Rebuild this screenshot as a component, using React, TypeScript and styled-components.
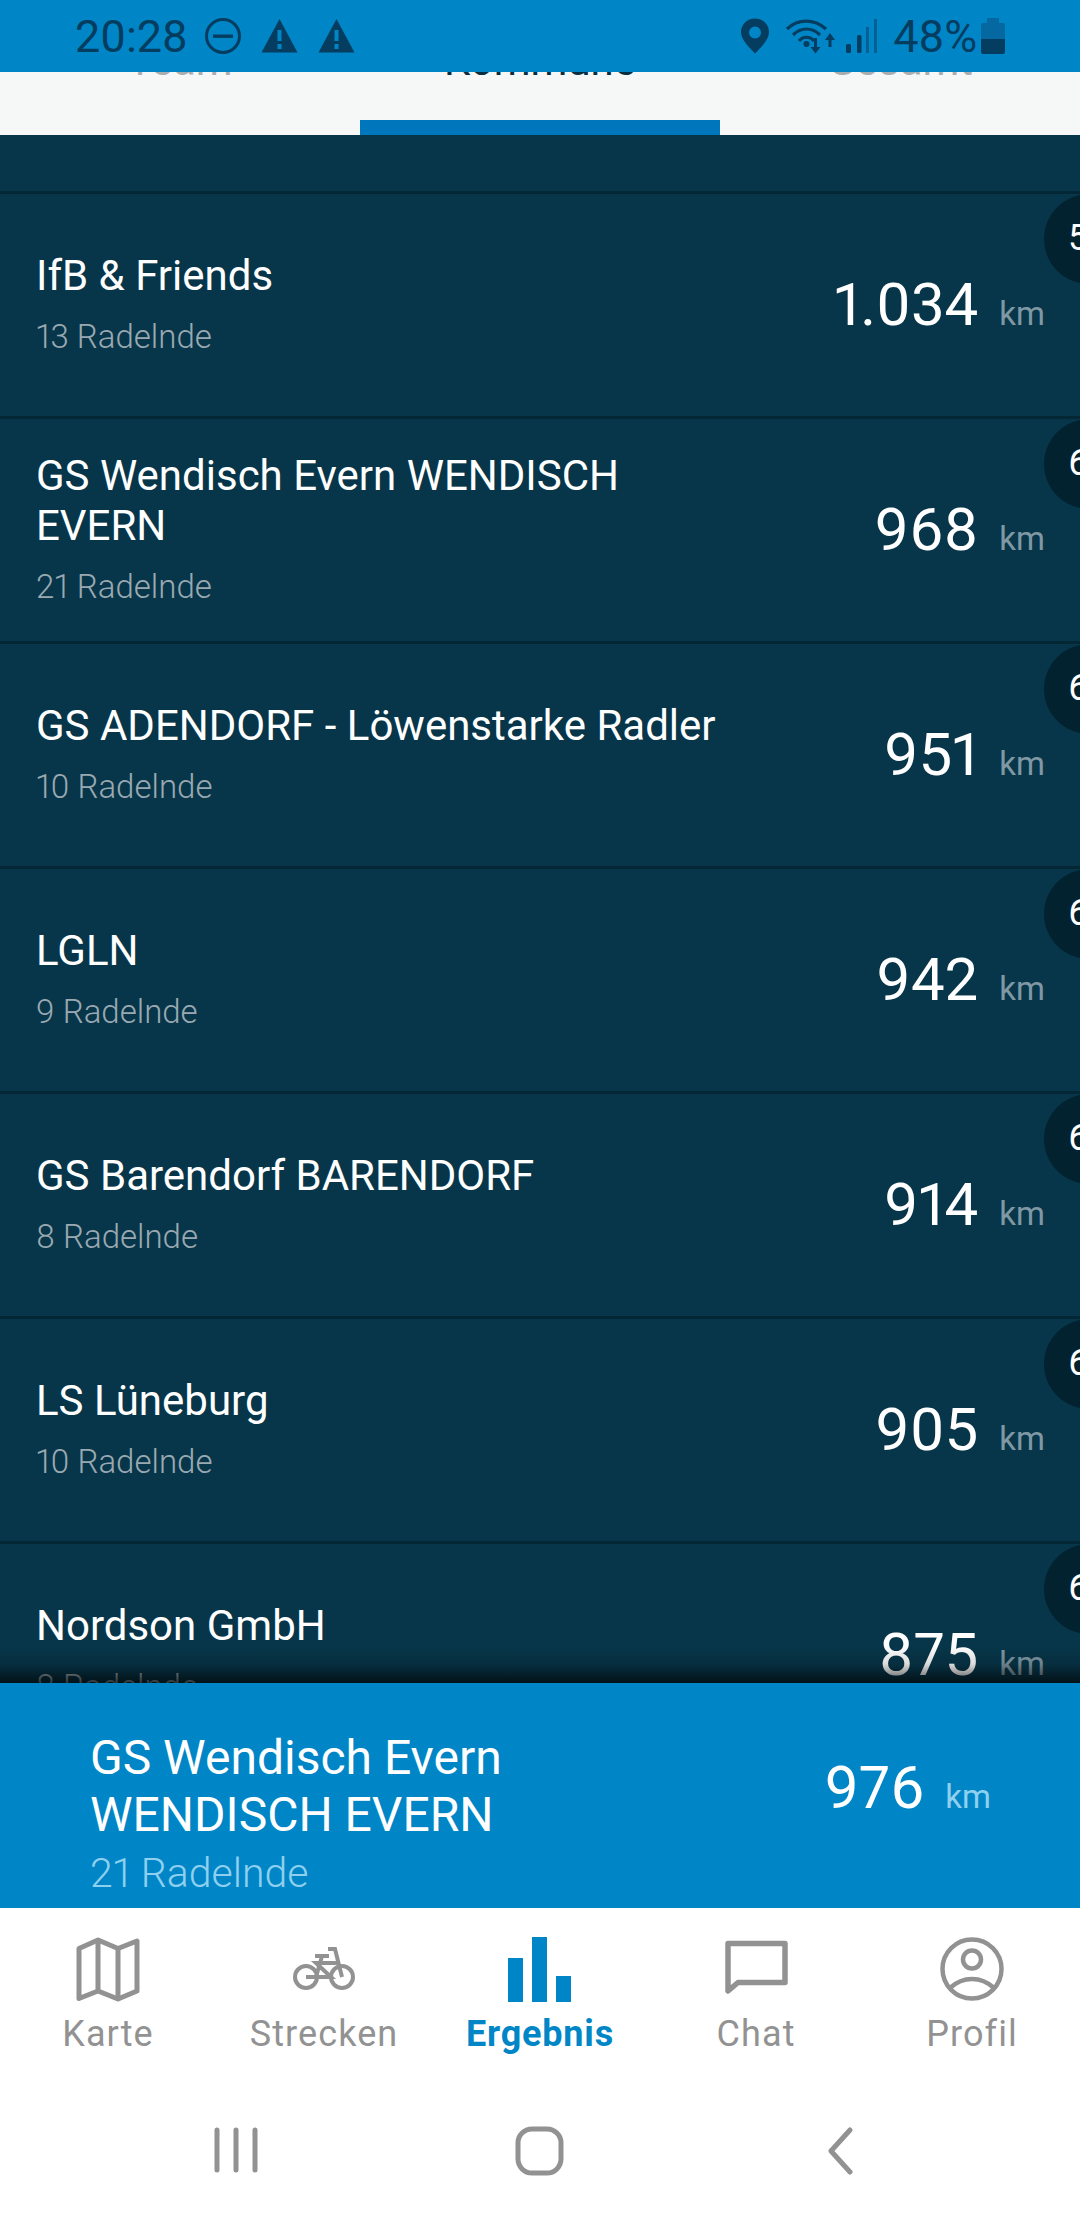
import React from "react";
import styled, { createGlobalStyle } from "styled-components";

const Global = createGlobalStyle`
  html, body { margin: 0; padding: 0; background: #fff; }
  body { font-family: Roboto, "Liberation Sans", sans-serif; font-variant-numeric: proportional-nums; }
  * { box-sizing: border-box; }
`;

const Screen = styled.div`
  width: 1080px;
  height: 2220px;
  display: flex;
  flex-direction: column;
  overflow: hidden;
  background: #fff;
`;

const StatusBar = styled.header`
  position: relative;
  z-index: 2;
  height: 72px;
  flex: none;
  background: #0086c6;
  color: #053d60;
  display: flex;
  align-items: center;
  justify-content: space-between;
  padding: 0 75px 0 75px;
  font-size: 45px;
`;

const StatusGroup = styled.div`
  display: flex;
  align-items: center;
  height: 72px;
`;

const StatusText = styled.span<{ $ml?: number }>`
  margin-left: ${(p) => p.$ml ?? 0}px;
  line-height: 72px;
  letter-spacing: -0.2px;
  padding-top: 1px;
`;

const StatusIcon = styled.svg<{ $ml?: number }>`
  display: block;
  flex: none;
  margin-left: ${(p) => p.$ml ?? 0}px;
`;

const Tabs = styled.nav`
  height: 63px;
  flex: none;
  display: grid;
  grid-template-columns: repeat(3, 360px);
  background: #f6f7f7;
`;

const Tab = styled.div<{ $active?: boolean }>`
  height: 63px;
  text-align: center;
  font-size: 42px;
  line-height: 48px;
  color: ${(p) => (p.$active ? "#0c2d3f" : "#a9adb0")};
  border-bottom: 15px solid ${(p) => (p.$active ? "#0076bc" : "transparent")};
`;

const TabLabel = styled.span`
  display: block;
  margin-top: -35px;
`;

const List = styled.section`
  position: relative;
  flex: 1;
  min-height: 0;
  overflow: hidden;
  background: #07364a;
  padding-top: 56px;
  &::after {
    content: "";
    position: absolute;
    left: 0;
    right: 0;
    bottom: 0;
    height: 38px;
    background: linear-gradient(
      to bottom,
      rgba(0, 0, 0, 0),
      rgba(0, 0, 0, 0.14) 50%,
      rgba(0, 0, 0, 0.68)
    );
  }
`;

const Row = styled.article`
  position: relative;
  height: 225px;
  border-top: 3px solid #042735;
  display: flex;
  align-items: center;
  padding: 0 35px 0 36px;
  overflow: hidden;
`;

const Info = styled.div`
  width: 700px;
  flex: none;
  margin-top: -3px;
`;

const Title = styled.div`
  color: #fff;
  font-size: 42px;
  line-height: 50px;
`;

const Sub = styled.div`
  color: #9aa9b1;
  font-size: 33px;
  font-weight: 300;
  line-height: 40px;
  margin-top: 16px;
`;

const Distance = styled.div`
  margin-left: auto;
  display: flex;
  align-items: baseline;
  color: #fff;
`;

const Value = styled.span`
  font-size: 60px;
  line-height: 70px;
`;

const Unit = styled.span<{ $color: string }>`
  font-size: 33px;
  margin-left: 21px;
  color: ${(p) => p.$color};
`;

const Badge = styled.div`
  position: absolute;
  top: 0;
  left: 1044px;
  width: 90px;
  height: 90px;
  border-radius: 50%;
  background: #03222f;
  color: #fff;
  font-size: 36px;
  line-height: 88px;
  padding-left: 24px;
`;

const Mine = styled.section`
  height: 225px;
  flex: none;
  position: relative;
  z-index: 1;
  background: #0086c6;
  display: flex;
  align-items: center;
  padding: 34px 89px 0 90px;
`;

const MineInfo = styled.div`
  width: 640px;
  flex: none;
`;

const MineTitle = styled.div`
  color: #fff;
  font-size: 48px;
  line-height: 57px;
`;

const MineSub = styled.div`
  color: #8fd0f0;
  font-size: 41px;
  font-weight: 300;
  line-height: 46px;
  margin-top: 7px;
`;

const MineDistance = styled(Distance)`
  margin-bottom: 50px;
`;

const BottomNav = styled.nav`
  height: 312px;
  flex: none;
  background: #fff;
  display: flex;
  flex-direction: column;
`;

const NavItems = styled.div`
  display: grid;
  grid-template-columns: repeat(5, 216px);
  height: 177px;
  padding-top: 28px;
`;

const NavItem = styled.div<{ $active?: boolean }>`
  display: flex;
  flex-direction: column;
  align-items: center;
  color: ${(p) => (p.$active ? "#0086c6" : "#929292")};
`;

const NavIcon = styled.svg`
  display: block;
  width: 66px;
  height: 66px;
  flex: none;
`;

const NavLabel = styled.span<{ $active?: boolean }>`
  font-size: 36px;
  font-weight: ${(p) => (p.$active ? 700 : 400)};
  letter-spacing: ${(p) => (p.$active ? 0.8 : 1.1)}px;
  line-height: 42px;
  margin-top: 11px;
`;

const SystemBar = styled.div`
  display: grid;
  grid-template-columns: 472px 136px 472px;
  height: 135px;
`;

const SystemCell = styled.div<{ $justify: string; $pad?: string }>`
  display: flex;
  align-items: flex-start;
  justify-content: ${(p) => p.$justify};
  padding: ${(p) => p.$pad ?? "0"};
`;

const rows = [
  { name: "IfB & Friends", count: "13 Radelnde", km: "1.034", rank: "5" },
  { name: "GS Wendisch Evern WENDISCH EVERN", count: "21 Radelnde", km: "968", rank: "6" },
  { name: "GS ADENDORF - Löwenstarke Radler", count: "10 Radelnde", km: "951", rank: "6" },
  { name: "LGLN", count: "9 Radelnde", km: "942", rank: "6" },
  { name: "GS Barendorf BARENDORF", count: "8 Radelnde", km: "914", rank: "6" },
  { name: "LS Lüneburg", count: "10 Radelnde", km: "905", rank: "6" },
  { name: "Nordson GmbH", count: "8 Radelnde", km: "875", rank: "6" },
];

const Warning = () => (
  <StatusIcon $ml={20} width="37" height="36" viewBox="0 0 37 36">
    <path fill="#053d60" fillRule="evenodd" d="M18.5 1 36.5 34.5H.5ZM16.5 12v11h4V12ZM16.5 26v5h4v-5Z" strokeLinejoin="round" />
  </StatusIcon>
);

export default function App() {
  return (
    <Screen>
      <Global />
      <StatusBar>
        <StatusGroup>
          <StatusText>20:28</StatusText>
          <StatusIcon $ml={17} width="36" height="36" viewBox="0 0 36 36">
            <circle cx="18" cy="18" r="16.5" fill="none" stroke="#053d60" strokeWidth="3" />
            <rect x="8" y="16.5" width="20" height="3.4" fill="#053d60" />
          </StatusIcon>
          <Warning />
          <Warning />
        </StatusGroup>
        <StatusGroup>
          <StatusIcon width="30" height="36" viewBox="0 0 30 36">
            <path fill="#053d60" fillRule="evenodd" d="M15 .5C7 .5 1 6.5 1 14c0 8 8 15 14 21.5C21 29 29 22 29 14 29 6.5 23 .5 15 .5ZM15 8.500a6 6 0 1 1 0 12 6 6 0 0 1 0-12Z" />
          </StatusIcon>
          <StatusIcon $ml={16} width="50" height="36" viewBox="0 0 50 36">
            <g fill="none" stroke="#053d60" strokeWidth="3.2">
              <path d="M1 11C12 .5 28 .5 40 11" />
              <path d="M7 17C15 9 26 9 34 17" />
              <path d="M13 23C17 18 24 18 28 23" />
            </g>
            <circle cx="20.500" cy="26" r="3" fill="#053d60" />
            <path fill="#053d60" d="M28 20h3v9h3.500L29.500 35.500 24.500 29H28ZM44 15l5 7h-3.500v7h-3v-7H39Z" />
          </StatusIcon>
          <StatusIcon $ml={10} width="32" height="36" viewBox="0 0 32 36">
            <rect x="0" y="26" width="5" height="9" rx="1.500" fill="#053d60" />
            <rect x="11" y="17" width="4.500" height="18" rx="1.500" fill="#053d60" />
            <rect x="20" y="9" width="3" height="26" fill="#055f92" />
            <rect x="28" y="1" width="3" height="34" fill="#055f92" />
          </StatusIcon>
          <StatusText $ml={15}>48%</StatusText>
          <StatusIcon $ml={4} width="24" height="36" viewBox="0 0 24 36">
            <path fill="#0568a0" d="M6 0h12v5h4a2 2 0 0 1 2 2v14H0V7a2 2 0 0 1 2-2h4Z" />
            <path fill="#053d60" d="M0 21h24v13a2 2 0 0 1-2 2H2a2 2 0 0 1-2-2Z" />
          </StatusIcon>
        </StatusGroup>
      </StatusBar>

      <Tabs>
        <Tab><TabLabel>Team</TabLabel></Tab>
        <Tab $active><TabLabel>Kommune</TabLabel></Tab>
        <Tab><TabLabel>Gesamt</TabLabel></Tab>
      </Tabs>

      <List>
        {rows.map((r) => (
          <Row key={r.name}>
            <Info>
              <Title>{r.name}</Title>
              <Sub>{r.count}</Sub>
            </Info>
            <Distance>
              <Value>{r.km}</Value>
              <Unit $color="#7f98a4">km</Unit>
            </Distance>
            <Badge>{r.rank}</Badge>
          </Row>
        ))}
      </List>

      <Mine>
        <MineInfo>
          <MineTitle>GS Wendisch Evern WENDISCH EVERN</MineTitle>
          <MineSub>21 Radelnde</MineSub>
        </MineInfo>
        <MineDistance>
          <Value>976</Value>
          <Unit $color="#8fd0f0">km</Unit>
        </MineDistance>
      </Mine>

      <BottomNav>
        <NavItems>
          <NavItem>
            <NavIcon viewBox="0 0 66 66">
              <g fill="none" stroke="currentColor" strokeWidth="5" strokeLinejoin="round">
                <path d="M4 12.500 23 4l20 8.500L62 5v50l-19 8-20-8-19 7.500Z" />
                <path d="M23 4v51M43 12.500V63" />
              </g>
            </NavIcon>
            <NavLabel>Karte</NavLabel>
          </NavItem>
          <NavItem>
            <NavIcon viewBox="0 0 66 66">
              <g fill="none" stroke="currentColor" strokeWidth="4">
                <circle cx="15" cy="41" r="11" />
                <circle cx="51" cy="41" r="11" />
                <path d="M15 41h25l-15-14h21M24 20h14M31 20l-6 21M37 13h7l7 28" />
              </g>
            </NavIcon>
            <NavLabel>Strecken</NavLabel>
          </NavItem>
          <NavItem $active>
            <NavIcon viewBox="0 0 66 66">
              <rect x="1" y="22" width="15" height="44" fill="currentColor" />
              <rect x="25" y="1" width="15" height="65" fill="currentColor" />
              <rect x="49" y="40" width="15" height="26" fill="currentColor" />
            </NavIcon>
            <NavLabel $active>Ergebnis</NavLabel>
          </NavItem>
          <NavItem>
            <NavIcon viewBox="0 0 66 66">
              <path fill="none" stroke="currentColor" strokeWidth="5.500" strokeLinejoin="round" d="M5 7.500h57v39H15L5 55Z" />
            </NavIcon>
            <NavLabel>Chat</NavLabel>
          </NavItem>
          <NavItem>
            <NavIcon viewBox="0 0 66 66">
              <g fill="none" stroke="currentColor" strokeWidth="4.500">
                <circle cx="33" cy="33" r="29.500" />
                <circle cx="33" cy="23.500" r="9" />
                <path d="M11 52C24 40 42 40 55 52" />
              </g>
            </NavIcon>
            <NavLabel>Profil</NavLabel>
          </NavItem>
        </NavItems>
        <SystemBar>
          <SystemCell $justify="flex-end" $pad="42px 214px 0 0">
            <svg width="44" height="46" viewBox="0 0 44 46">
              <g stroke="#929292" strokeWidth="5" strokeLinecap="round">
                <path d="M3 3v40M22 3v40M41 3v40" />
              </g>
            </svg>
          </SystemCell>
          <SystemCell $justify="center" $pad="41px 0 0 0">
            <svg width="50" height="50" viewBox="0 0 50 50">
              <rect x="3" y="3" width="43" height="44" rx="14" fill="none" stroke="#929292" strokeWidth="5" />
            </svg>
          </SystemCell>
          <SystemCell $justify="flex-start" $pad="42px 0 0 218px">
            <svg width="28" height="48" viewBox="0 0 28 48">
              <path d="M24 3 5 24l19 21" fill="none" stroke="#929292" strokeWidth="5" strokeLinecap="round" strokeLinejoin="round" />
            </svg>
          </SystemCell>
        </SystemBar>
      </BottomNav>
    </Screen>
  );
}
